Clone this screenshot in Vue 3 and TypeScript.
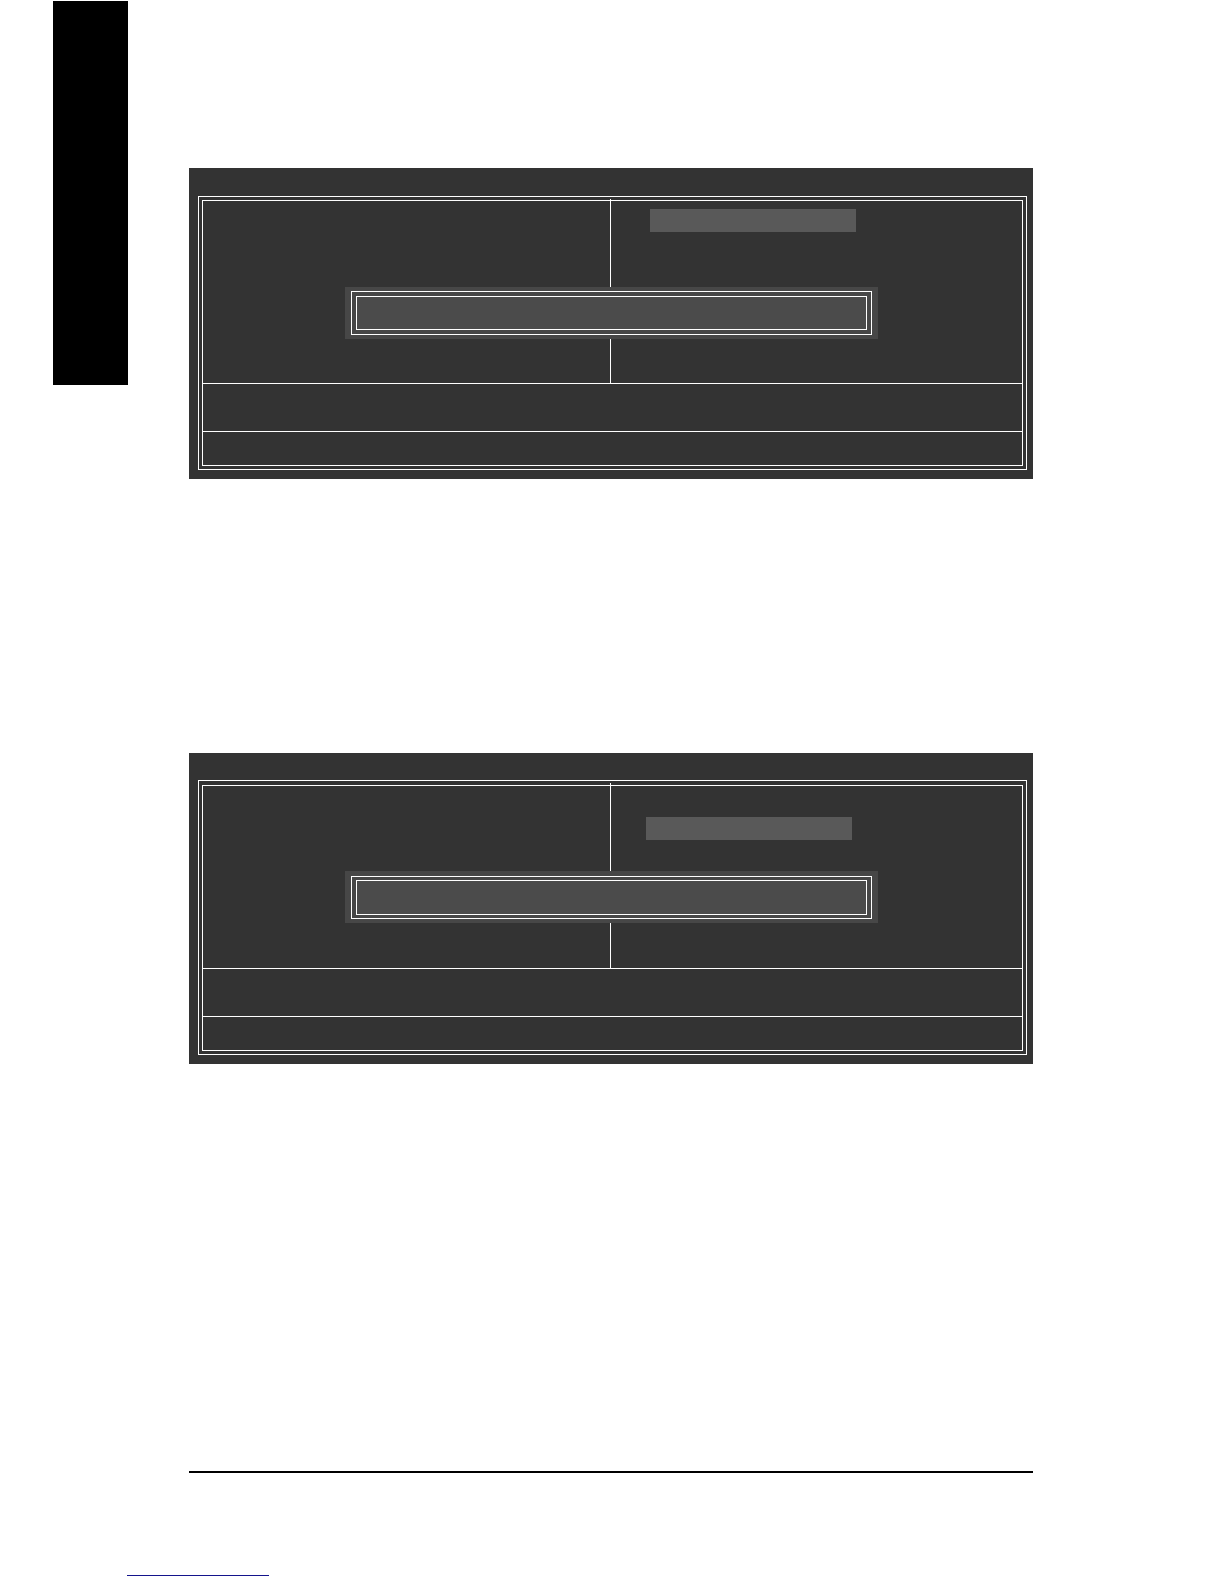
<script setup lang="ts">
interface Screen {
  id: string
  selected: 'first' | 'second'
}

const screens: Screen[] = [
  { id: 'upper', selected: 'first' },
  { id: 'lower', selected: 'second' },
]
</script>

<template>
  <div class="page">
    <div class="body">
      <aside class="tab"></aside>
      <main class="content">
        <section v-for="screen in screens" :key="screen.id" class="screen" :class="screen.selected">
          <div class="frame">
            <div class="inner">
              <div class="menu">
                <div class="column"></div>
                <div class="divider"></div>
                <div class="column">
                  <div class="highlight"></div>
                </div>
              </div>
              <div class="keys"></div>
              <div class="hint"></div>
            </div>
          </div>
          <div class="dialog">
            <div class="dialog-frame">
              <div class="dialog-inner"></div>
            </div>
          </div>
        </section>
        <hr class="rule" />
      </main>
    </div>
    <footer class="footer">
      <div class="underline"></div>
    </footer>
  </div>
</template>

<style>
body {
  margin: 0;
  background: #fff;
}
</style>

<style scoped>
.page,
.page * {
  box-sizing: border-box;
}

.page {
  padding: 1px 0 8px;
  font-family: "Liberation Sans", Arial, sans-serif;
}

.body {
  display: flex;
  align-items: flex-start;
  gap: 61px;
  padding: 0 191px 0 53px;
}

.tab {
  flex: 0 0 75px;
  height: 384px;
  background: #000;
}

.content {
  flex: 1;
  display: flex;
  flex-direction: column;
  gap: 274px;
  padding-top: 167px;
}

.screen {
  position: relative;
  padding: 28px 6px 9px 9px;
  background: #333;
}

.frame {
  padding: 3px;
  border: 1px solid #fff;
}

.inner {
  border: 1px solid #fff;
}

.menu {
  display: grid;
  grid-template-columns: 407fr 1px 411fr;
  height: 182px;
}

.divider {
  margin-top: -2px;
  background: #fff;
}

.highlight {
  width: 50%;
  height: 23px;
  margin: 8px 0 0 39px;
  background: #595959;
}

.keys {
  height: 48px;
  border-top: 1px solid #fff;
}

.hint {
  height: 34px;
  border-top: 1px solid #fff;
}

.dialog {
  position: absolute;
  top: 119px;
  left: 156px;
  right: 155px;
  padding: 4px 6px;
  background: #474747;
}

.dialog-frame {
  padding: 4px;
  border: 1px solid #fff;
}

.dialog-inner {
  height: 34px;
  border: 1px solid #fff;
  background: #4b4b4b;
}

.second {
  padding-top: 27px;
}

.second .frame {
  padding-top: 4px;
}

.second .divider {
  margin-top: -3px;
}

.second .highlight {
  margin: 31px 0 0 35px;
}

.second .dialog {
  top: 118px;
  padding-top: 5px;
}

.second .dialog-frame {
  padding: 3px 4px;
}

.second .dialog-inner {
  height: 35px;
}

.rule {
  width: 100%;
  height: 2px;
  margin: 133px 0 0;
  border: 0;
  background: #000;
}

.footer {
  padding: 102px 0 0 127px;
}

.underline {
  width: 142px;
  height: 1px;
  background: #14148c;
}
</style>
